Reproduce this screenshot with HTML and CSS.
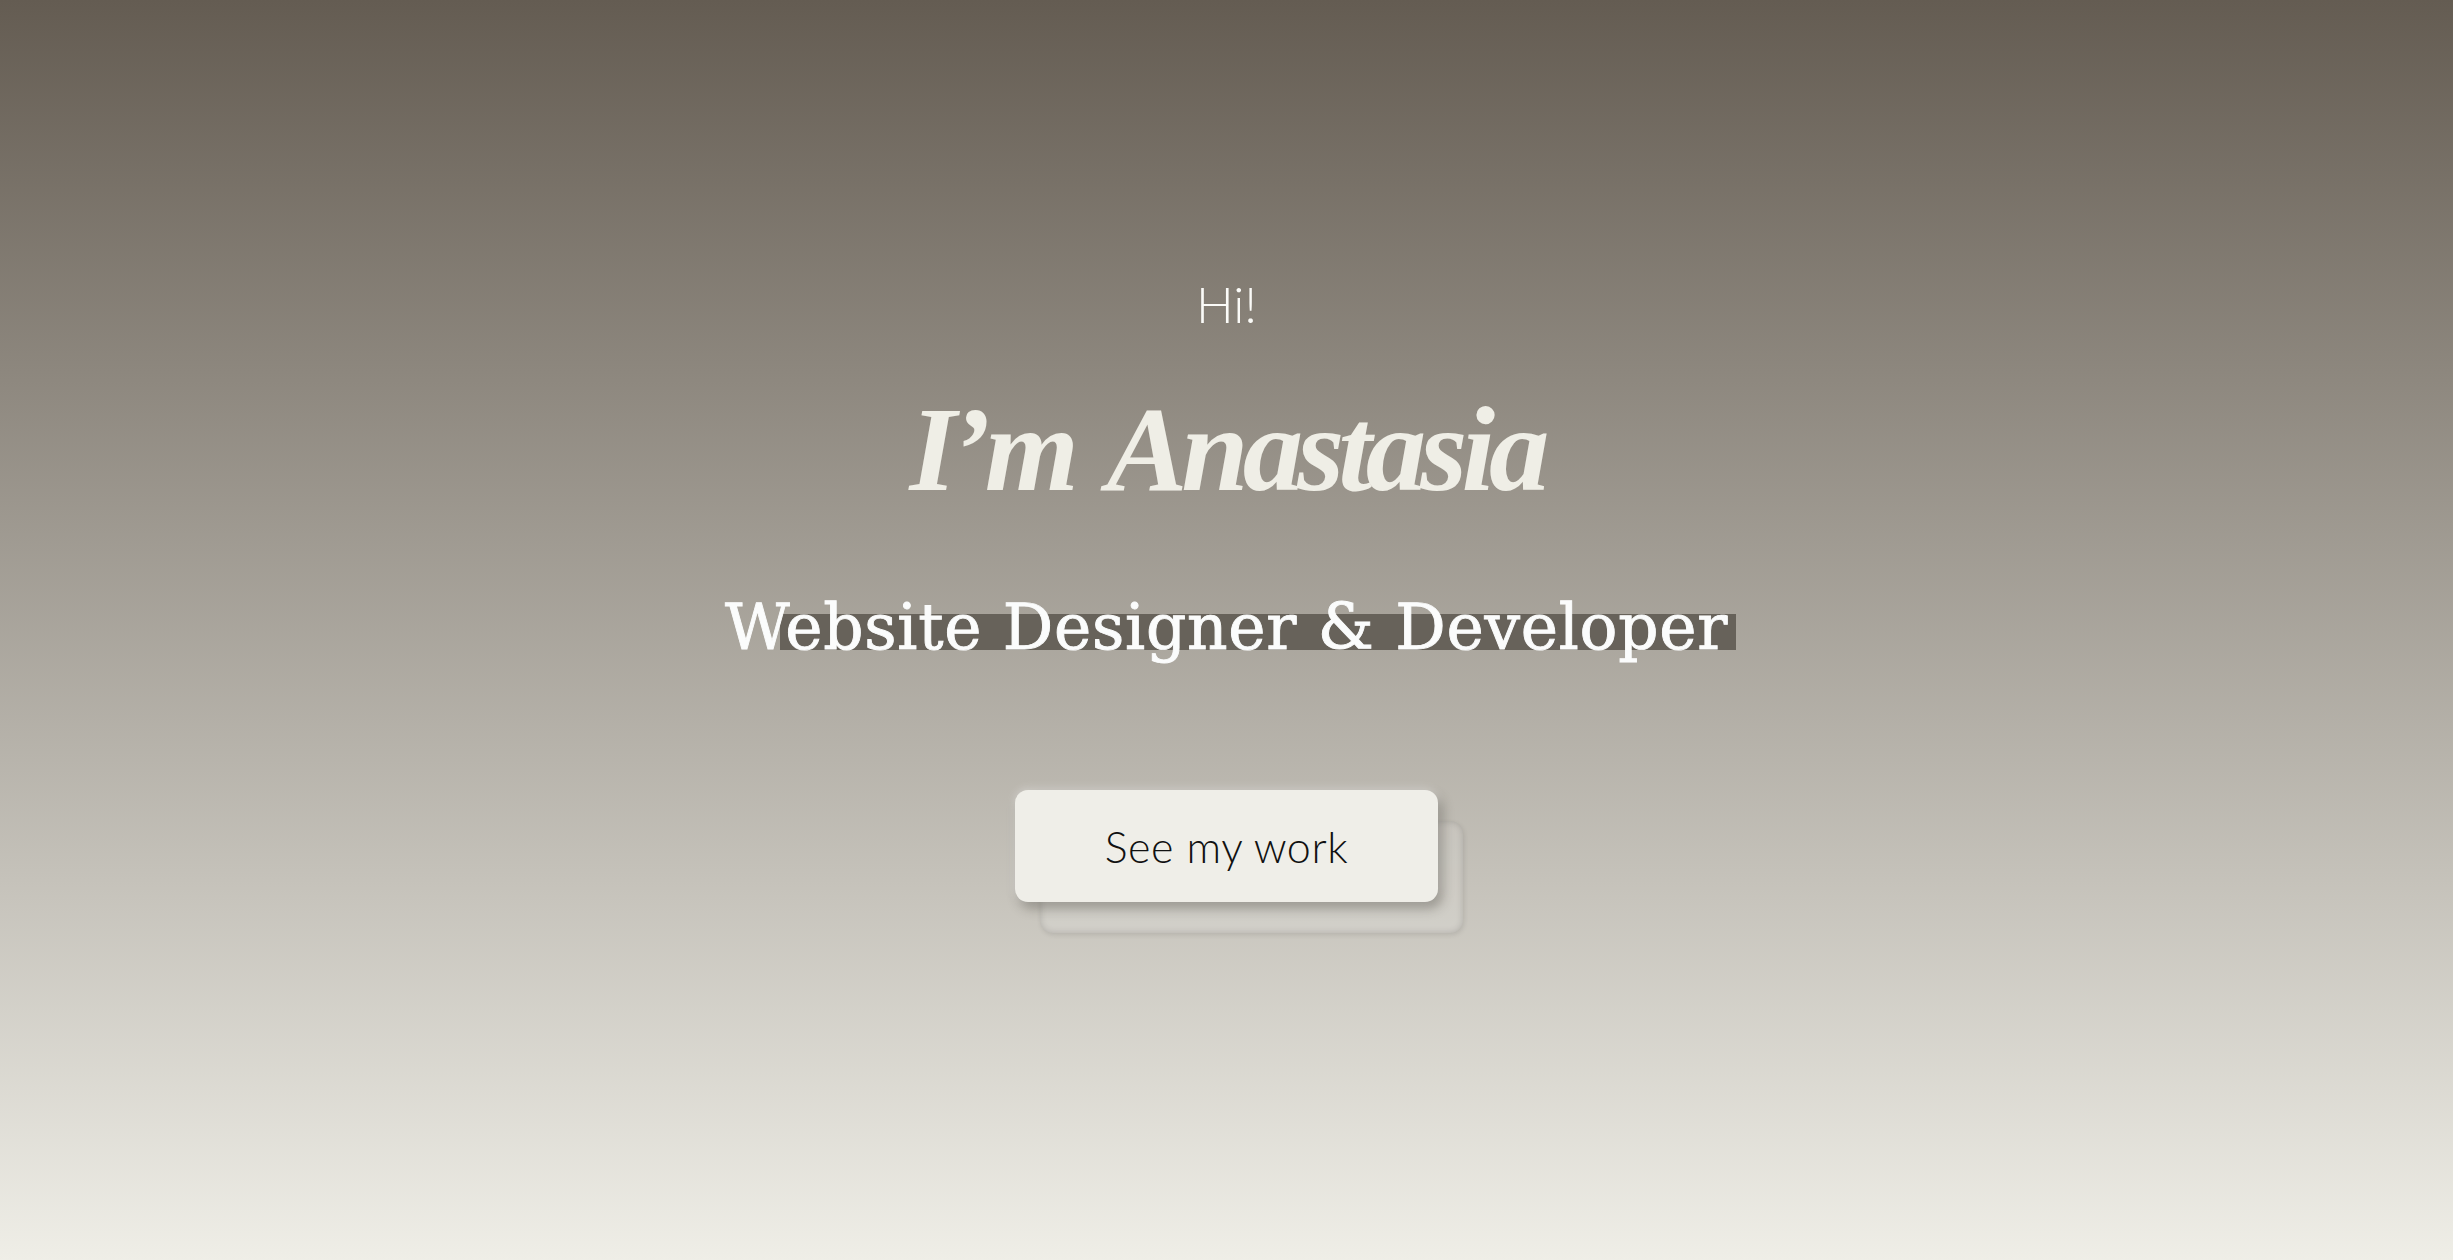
FILE: index.html
```html
<!DOCTYPE html>
<html lang="en">
<head>
<meta charset="utf-8">
<title>Anastasia</title>
<link rel="stylesheet" href="styles.css">
</head>
<body>
<main class="hero">
  <p class="hello">Hi!</p>
  <h1 class="name">I’m Anastasia</h1>
  <h2 class="role"><span class="role-text">Website Designer &amp; Developer</span></h2>
  <div class="cta-wrap">
    <a class="cta" href="#work">See my work</a>
  </div>
</main>
</body>
</html>
```

FILE: styles.css
```css
html, body {
  margin: 0;
  padding: 0;
}

body {
  min-height: 1260px;
  background: linear-gradient(to bottom, #645c52 0%, #efeee7 100%);
}

.hero {
  display: flex;
  flex-direction: column;
  align-items: center;
  height: 1260px;
  box-sizing: border-box;
  padding-top: 279px;
  text-align: center;
}

.hello {
  margin: 0;
  font-family: "Lato", "Open Sans", sans-serif;
  font-weight: 300;
  font-size: 50px;
  line-height: 1;
  color: #fbfbf8;
}

.name {
  margin: 60px 0 0;
  font-family: "Liberation Serif", serif;
  font-style: italic;
  font-weight: 700;
  font-size: 121px;
  letter-spacing: -6px;
  word-spacing: 14px;
  line-height: 1;
  color: #efeee6;
}

.role {
  margin: 86px 0 0;
  font-family: "DejaVu Serif", serif;
  font-weight: 400;
  font-size: 63px;
  letter-spacing: 0.7px;
  line-height: 1;
  color: #fbfcfc;
  -webkit-text-stroke: 0.9px #fbfcfc;
}

.role-text {
  position: relative;
  z-index: 0;
  display: inline-block;
}

.role-text::before {
  content: "";
  position: absolute;
  z-index: -1;
  left: 55px;
  right: -8px;
  top: 18px;
  height: 36px;
  background: #67625a;
}

.cta-wrap {
  margin-top: 131px;
  position: relative;
  z-index: 0;
}

.cta {
  position: relative;
  display: flex;
  align-items: center;
  justify-content: center;
  width: 423px;
  height: 112px;
  box-sizing: border-box;
  border-radius: 13px;
  background: #efeee8;
  color: #111111;
  text-decoration: none;
  font-family: "Lato", "Open Sans", sans-serif;
  font-weight: 300;
  font-size: 43px;
  letter-spacing: 0.6px;
  box-shadow: 4px 6px 12px rgba(40, 36, 30, 0.35), 0 -1px 8px rgba(255, 255, 255, 0.45);
}

.cta-wrap::before {
  content: "";
  position: absolute;
  z-index: -1;
  left: 25px;
  top: 31px;
  width: 423px;
  height: 112px;
  border-radius: 13px;
  background: rgba(255, 255, 255, 0.14);
  box-shadow: inset 0 0 7px rgba(0, 0, 0, 0.16), 1px 2px 5px rgba(0, 0, 0, 0.1);
}
```
